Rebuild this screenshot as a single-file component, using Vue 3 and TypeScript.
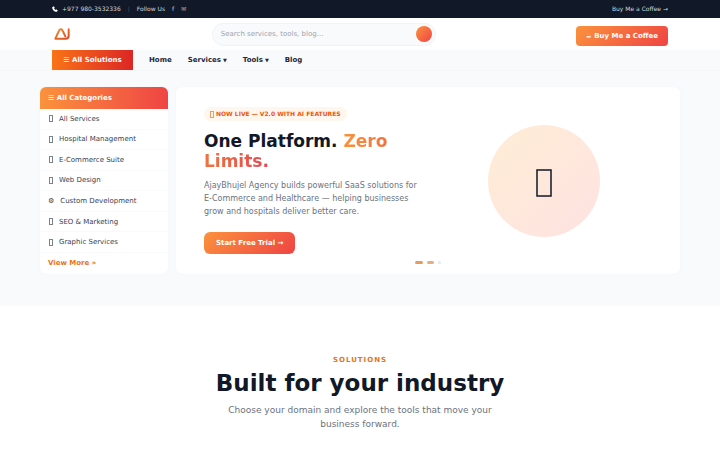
<script setup lang="ts">
import { ref } from 'vue'

interface Category {
  icon?: string
  label: string
}

interface NavLink {
  label: string
  menu: boolean
}

const categories: Category[] = [
  { label: 'All Services' },
  { label: 'Hospital Management' },
  { label: 'E-Commerce Suite' },
  { label: 'Web Design' },
  { icon: '⚙', label: 'Custom Development' },
  { label: 'SEO & Marketing' },
  { label: 'Graphic Services' },
]

const links: NavLink[] = [
  { label: 'Home', menu: false },
  { label: 'Services', menu: true },
  { label: 'Tools', menu: true },
  { label: 'Blog', menu: false },
]
const query = ref('')
</script>

<template>
  <div class="page">
    <div class="topbar">
      <div class="wrap topbar-row">
        <a class="phone" href="#">
          <svg class="phone-icon" viewBox="0 0 24 24" aria-hidden="true">
            <path d="M1 4.500 6.500 1l4.700 6.200-2.800 2.500c1 2.400 3.400 4.800 5.900 5.900l2.500-2.800L23 17.500 19.500 23C9.500 23.500.5 14.500 1 4.500z" fill="currentColor" />
          </svg>
          <span>+977 980-3532336</span>
        </a>
        <span class="divider">|</span>
        <span>Follow Us</span>
        <a href="#" aria-label="Facebook">f</a>
        <a href="#" aria-label="Email">✉</a>
        <a class="push" href="#">Buy Me a Coffee →</a>
      </div>
    </div>

    <header class="header">
      <div class="wrap header-row">
        <a class="logo" href="#" aria-label="AJ">
          <svg class="logo-mark" viewBox="0 0 48 36" aria-hidden="true">
            <defs>
              <linearGradient id="mark" x1="0" y1="0" x2="1" y2="1">
                <stop offset="0" stop-color="#f28a2e" />
                <stop offset="1" stop-color="#dc4a22" />
              </linearGradient>
            </defs>
            <path
              d="M13 32H4L15.500 7Q17 3.500 20 3.500h1q3 0 4.500 3.500L34 25M13 32h21q10 0 10-9V3.500"
              fill="none" stroke="url(#mark)" stroke-width="6" stroke-linecap="round" stroke-linejoin="round"
            />
          </svg>
        </a>
        <form class="search" role="search" @submit.prevent>
          <input v-model="query" type="search" aria-label="Search" placeholder="Search services, tools, blog..." />
          <button type="submit" aria-label="Submit search"></button>
        </form>
        <a class="button coffee" href="#">☕ Buy Me a Coffee</a>
      </div>
    </header>

    <nav class="nav">
      <div class="wrap nav-row">
        <button class="solutions" type="button">☰ All Solutions</button>
        <a v-for="link in links" :key="link.label" href="#">{{ link.label }}<span v-if="link.menu" class="caret">▼</span></a>
      </div>
    </nav>

    <section class="hero">
      <div class="hero-grid">
        <aside class="sidebar">
          <h2>☰ All Categories</h2>
          <ul>
            <li v-for="item in categories" :key="item.label">
              <a href="#">
                <span v-if="item.icon">{{ item.icon }}</span>
                <span v-else class="box"></span>
                <span>{{ item.label }}</span>
              </a>
            </li>
          </ul>
          <a class="more" href="#">View More »</a>
        </aside>

        <article class="slide">
          <div class="copy">
            <span class="badge"><span class="box"></span>NOW LIVE — V2.0 WITH AI FEATURES</span>
            <h1>One Platform. <span class="accent warm">Zero</span> <span class="accent hot">Limits.</span></h1>
            <p>AjayBhujel Agency builds powerful SaaS solutions for E-Commerce and Healthcare — helping businesses grow and hospitals deliver better care.</p>
            <a class="button trial" href="#">Start Free Trial →</a>
          </div>
          <div class="visual">
            <div class="disc">
              <svg class="disc-icon" viewBox="0 0 16 28" aria-hidden="true">
                <rect x="1" y="1" width="14" height="26" fill="none" stroke="#111827" stroke-width="1.500" />
              </svg>
            </div>
          </div>
          <div class="dots">
            <button class="dot wide" type="button" aria-label="Slide 1"></button>
            <button class="dot mid" type="button" aria-label="Slide 2"></button>
            <button class="dot" type="button" aria-label="Slide 3"></button>
          </div>
        </article>
      </div>
    </section>

    <section class="industry">
      <div class="eyebrow">SOLUTIONS</div>
      <h2>Built for your industry</h2>
      <p>Choose your domain and explore the tools that move your business forward.</p>
    </section>
  </div>
</template>

<style>
body {
  margin: 0;
  background: #fff;
}
</style>

<style scoped>
.page {
  font-family: "DejaVu Sans", sans-serif;
  font-size: 7px;
  line-height: 10px;
  color: #374151;
}
.page * {
  box-sizing: border-box;
}
a {
  color: inherit;
  text-decoration: none;
}
button,
input {
  font: inherit;
  border: 0;
  padding: 0;
}
h1,
h2,
p,
ul {
  margin: 0;
  padding: 0;
}
.wrap {
  max-width: 640px;
  margin: 0 auto;
  padding: 0 12px;
}
.topbar {
  background: #111827;
  color: #d1d5db;
  font-size: 6px;
}
.topbar-row {
  display: flex;
  align-items: center;
  gap: 7px;
  height: 18px;
}
.phone {
  display: flex;
  align-items: center;
  gap: 4px;
}
.phone-icon {
  width: 6px;
  height: 6px;
  color: #fff;
}
.divider {
  color: #4b5563;
}
.push {
  margin-left: auto;
}
.header-row {
  display: flex;
  align-items: center;
  justify-content: space-between;
  height: 32px;
}
.logo {
  padding: 0 2px;
}
.logo-mark {
  display: block;
  width: 16px;
  height: 12px;
}
.search {
  display: flex;
  align-items: center;
  width: 224px;
  height: 23px;
  padding: 0 3px 0 8px;
  border: 1px solid #f1f3f6;
  border-radius: 12px;
  background: #f9fafb;
}
.search input {
  flex: 1;
  min-width: 0;
  background: transparent;
  outline: none;
  color: #374151;
}
.search input::placeholder {
  color: #9ca3af;
}
.search button {
  width: 16px;
  height: 16px;
  border-radius: 50%;
  background: linear-gradient(135deg, #fb923c, #ef4444);
}
.button {
  display: inline-flex;
  align-items: center;
  color: #fff;
  font-weight: 700;
  background: linear-gradient(135deg, #fb923c, #ef4444);
}
.coffee {
  height: 20px;
  padding: 0 10px;
  margin-top: 4px;
  border-radius: 4px;
}
.nav {
  background: #f9fafb;
  border-bottom: 1px solid #f5f6f8;
}
.nav-row {
  display: flex;
  align-items: center;
  gap: 16px;
  height: 20px;
  color: #1f2937;
  font-weight: 700;
}
.caret {
  margin-left: 2px;
  font-size: 5px;
}
.solutions {
  min-width: 81px;
  height: 20px;
  padding: 0 10px;
  color: #fff;
  background: linear-gradient(90deg, #f97316, #dc2626);
}
.hero {
  padding: 16px 40px 32px;
  background: #f8fafc;
}
.hero-grid {
  display: grid;
  grid-template-columns: 128px 1fr;
  gap: 8px;
  max-width: 640px;
  margin: 0 auto;
}
.sidebar,
.slide {
  background: #fff;
  border-radius: 6px;
  box-shadow: 0 0 2px #eef1f5;
}
.sidebar {
  overflow: hidden;
}
.sidebar h2 {
  padding: 6px 8px;
  font-size: 7px;
  line-height: 10px;
  color: #fff;
  background: linear-gradient(90deg, #fb923c, #ef4444);
}
.sidebar ul {
  display: grid;
  grid-auto-rows: 1fr;
  height: 144px;
  list-style: none;
}
.sidebar li {
  display: grid;
  border-bottom: 1px solid #f9fafb;
}
.sidebar li a {
  display: flex;
  align-items: center;
  gap: 6px;
  padding: 0 8px;
}
.box {
  display: inline-block;
  width: 4px;
  height: 7px;
  margin-left: 1px;
  border: 1px solid #7b8290;
}
.more {
  display: block;
  padding: 5px 8px 6px;
  color: #ea7317;
  font-weight: 700;
}
.slide {
  position: relative;
  display: grid;
  grid-template-columns: 1fr 1fr;
  gap: 16px;
  align-items: center;
  padding: 0 28px;
}
.badge {
  display: inline-flex;
  align-items: center;
  gap: 2px;
  padding: 2px 6px;
  border-radius: 8px;
  font-size: 6px;
  font-weight: 700;
  color: #ea580c;
  background: #fff7ed;
}
.badge .box {
  margin-left: 0;
  border-color: #ef9a6c;
}
h1 {
  margin-top: 10px;
  font-size: 17px;
  line-height: 20px;
  color: #111827;
}
.accent {
  color: transparent;
  -webkit-background-clip: text;
  background-clip: text;
}
.warm {
  background-image: linear-gradient(90deg, #fb923c, #f0743f);
}
.hot {
  background-image: linear-gradient(90deg, #f0743f, #e64650);
}
.copy p {
  margin-top: 8px;
  font-size: 8px;
  line-height: 13px;
  color: #6b7280;
}
.trial {
  height: 22px;
  margin-top: 14px;
  padding: 0 12px;
  border-radius: 6px;
}
.visual {
  display: flex;
  justify-content: center;
}
.disc {
  display: flex;
  align-items: center;
  justify-content: center;
  width: 112px;
  height: 112px;
  padding-top: 4px;
  border-radius: 50%;
  background: linear-gradient(135deg, #ffedd5, #fee2e2);
}
.disc-icon {
  width: 16px;
  height: 28px;
}
.dots {
  position: absolute;
  bottom: 10px;
  left: 0;
  right: 0;
  display: flex;
  justify-content: center;
  gap: 4px;
}
.dot {
  width: 3px;
  height: 3px;
  border-radius: 2px;
  background: #e5e7eb;
}
.dot.mid {
  width: 7px;
  background: #e7ad80;
}
.dot.wide {
  width: 8px;
  background: #e59a62;
}
.industry {
  padding: 48px 24px 16px;
  text-align: center;
}
.eyebrow {
  line-height: 12px;
  font-weight: 700;
  letter-spacing: 1px;
  color: #ea7317;
}
.industry h2 {
  margin-top: 3px;
  font-size: 23px;
  line-height: 28px;
  color: #111827;
}
.industry p {
  max-width: 288px;
  margin: 6px auto 0;
  font-size: 9px;
  line-height: 14px;
  color: #6b7280;
}
</style>
